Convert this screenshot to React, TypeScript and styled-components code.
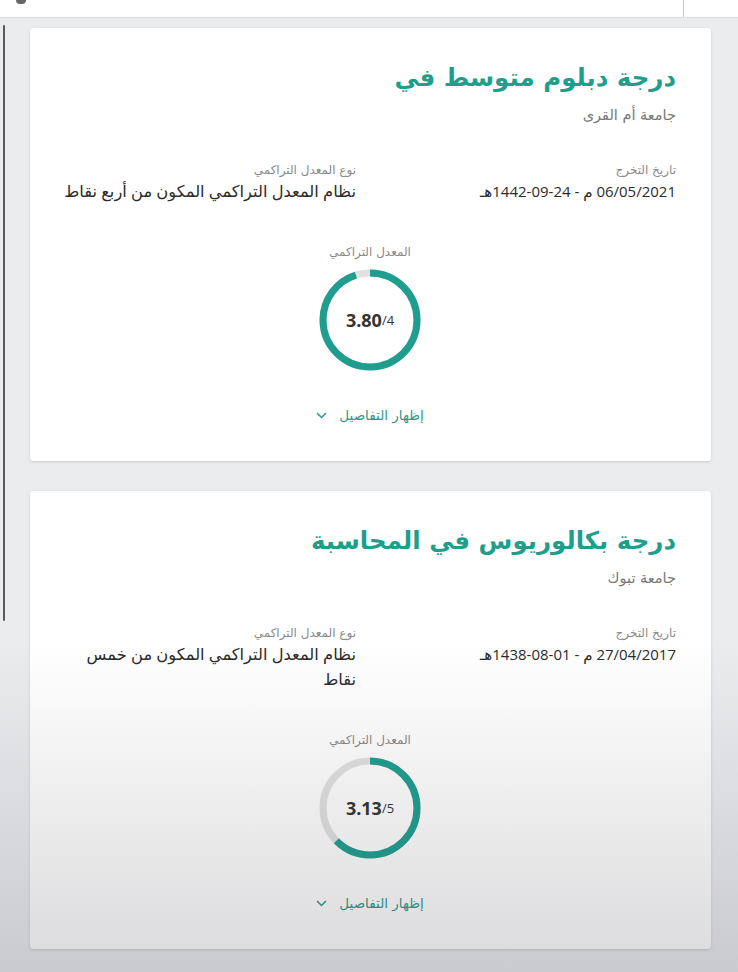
import styled, { createGlobalStyle } from "styled-components";

const GlobalStyle = createGlobalStyle`
    html, body {
        margin: 0;
        padding: 0;
        background: #ebecee;
    }
    body {
        font-family: "Open Sans", "DejaVu Sans", sans-serif;
    }
`;

const Page = styled.div`
    position: relative;
    width: 738px;
    height: 972px;
    overflow: hidden;
    direction: rtl;
    background: #ebecee;
`;

const TopBar = styled.div`
    height: 17px;
    background: #fff;
    border-bottom: 1px solid #dfe0e2;
    display: flex;
    justify-content: space-between;
    align-items: flex-start;
    padding: 0 54px 0 16px;
`;

const BarDivider = styled.div`
    width: 1px;
    height: 17px;
    background: #c8c9cc;
`;

const BarDot = styled.div`
    width: 10px;
    height: 4px;
    border-radius: 0 0 6px 6px;
    background: #666;
`;

const ScrollThumb = styled.div`
    position: absolute;
    left: 3px;
    top: 25px;
    width: 2px;
    height: 596px;
    background: #5a5a5c;
    border-radius: 1px;
`;

const Shade = styled.div`
    position: absolute;
    left: 0;
    right: 0;
    bottom: 0;
    height: 330px;
    pointer-events: none;
    background: linear-gradient(to bottom, rgba(60, 60, 70, 0) 0%, rgba(60, 60, 70, 0.19) 100%);
`;

const List = styled.div`
    display: flex;
    flex-direction: column;
    gap: 30px;
    padding: 10px 27px 0 30px;
`;

const Card = styled.div`
    background: #fff;
    border-radius: 3px;
    box-shadow: 0 1px 3px rgba(0, 0, 0, 0.14);
    padding: 34px 35px 0 26px;
`;

const Title = styled.h2`
    margin: 0;
    color: #1f9e8c;
    font-family: "DejaVu Sans", sans-serif;
    font-weight: bold;
    font-size: 24.5px;
    line-height: 32px;
`;

const School = styled.div`
    margin-top: 11px;
    color: #777;
    font-family: "DejaVu Sans", sans-serif;
    font-size: 14.5px;
    line-height: 20px;
`;

const Facts = styled.div`
    display: grid;
    grid-template-columns: 296px 296px;
    column-gap: 24px;
    margin-top: 37px;
`;

const Fact = styled.div`
    display: flex;
    flex-direction: column;
    gap: 1px;
`;

const Label = styled.div`
    color: #8a8a8a;
    font-family: "DejaVu Sans", sans-serif;
    font-size: 12px;
    line-height: 16px;
`;

const Value = styled.div<{ $size: number }>`
    color: #2b2b2b;
    font-family: "Open Sans", "DejaVu Sans", sans-serif;
    font-size: ${(p) => p.$size}px;
    line-height: 25px;
`;

const Ltr = styled.span`
    direction: ltr;
    unicode-bidi: isolate;
`;

const GaugeBlock = styled.div`
    display: flex;
    flex-direction: column;
    align-items: center;
    margin: 40px 0 0 8px;
    gap: 9px;
`;

const GaugeWrap = styled.div`
    position: relative;
    width: 102px;
    height: 102px;
`;

const GaugeText = styled.div`
    position: absolute;
    inset: 0;
    display: flex;
    align-items: center;
    justify-content: center;
    direction: ltr;
    color: #333;
    font-family: "Open Sans", sans-serif;
`;

const Score = styled.span`
    font-size: 18px;
    font-weight: 700;
`;

const Scale = styled.span`
    font-size: 13px;
`;

const Toggle = styled.button`
    display: flex;
    align-items: center;
    gap: 12px;
    margin: 26px 0 37px;
    padding: 0;
    border: none;
    background: none;
    color: #2c9a89;
    font-family: "DejaVu Sans", sans-serif;
    font-size: 13.5px;
    line-height: 18px;
    cursor: pointer;
`;

type Degree = {
    title: string;
    school: string;
    greg: string;
    hijri: string;
    system: string;
    gpa: string;
    max: number;
};

const degrees: Degree[] = [
    {
        title: "درجة دبلوم متوسط في",
        school: "جامعة أم القرى",
        greg: "06/05/2021",
        hijri: "1442-09-24",
        system: "نظام المعدل التراكمي المكون من أربع نقاط",
        gpa: "3.80",
        max: 4,
    },
    {
        title: "درجة بكالوريوس في المحاسبة",
        school: "جامعة تبوك",
        greg: "27/04/2017",
        hijri: "1438-08-01",
        system: "نظام المعدل التراكمي المكون من خمس نقاط",
        gpa: "3.13",
        max: 5,
    },
];

function Gauge({ gpa, max }: { gpa: string; max: number }) {
    const r = 47;
    const c = 2 * Math.PI * r;
    const part = (parseFloat(gpa) / max) * c;
    return (
        <GaugeWrap>
            <svg width="102" height="102" viewBox="0 0 102 102">
                <circle cx="51" cy="51" r={r} fill="none" stroke="#e1e1e1" strokeWidth="7" />
                <circle
                    cx="51"
                    cy="51"
                    r={r}
                    fill="none"
                    stroke="#1f9e8f"
                    strokeWidth="7"
                    strokeDasharray={`${part} ${c}`}
                    transform="rotate(-90 51 51)"
                />
            </svg>
            <GaugeText>
                <Score>{gpa}</Score>
                <Scale>/{max}</Scale>
            </GaugeText>
        </GaugeWrap>
    );
}

function DegreeCard({ d }: { d: Degree }) {
    return (
        <Card>
            <Title>{d.title}</Title>
            <School>{d.school}</School>
            <Facts>
                <Fact>
                    <Label>تاريخ التخرج</Label>
                    <Value $size={15}>
                        <Ltr>{d.greg}</Ltr> م - <Ltr>{d.hijri}</Ltr>هـ
                    </Value>
                </Fact>
                <Fact>
                    <Label>نوع المعدل التراكمي</Label>
                    <Value $size={16.3}>{d.system}</Value>
                </Fact>
            </Facts>
            <GaugeBlock>
                <Label>المعدل التراكمي</Label>
                <Gauge gpa={d.gpa} max={d.max} />
                <Toggle>
                    إظهار التفاصيل
                    <svg width="11" height="7" viewBox="0 0 11 7" fill="none">
                        <path d="M1 1l4.5 4.5L10 1" stroke="#2c9a89" strokeWidth="1.5" />
                    </svg>
                </Toggle>
            </GaugeBlock>
        </Card>
    );
}

export default function App() {
    return (
        <Page>
            <GlobalStyle />
            <TopBar>
                <BarDivider />
                <BarDot />
            </TopBar>
            <List>
                {degrees.map((d) => (
                    <DegreeCard key={d.title} d={d} />
                ))}
            </List>
            <ScrollThumb />
            <Shade />
        </Page>
    );
}
